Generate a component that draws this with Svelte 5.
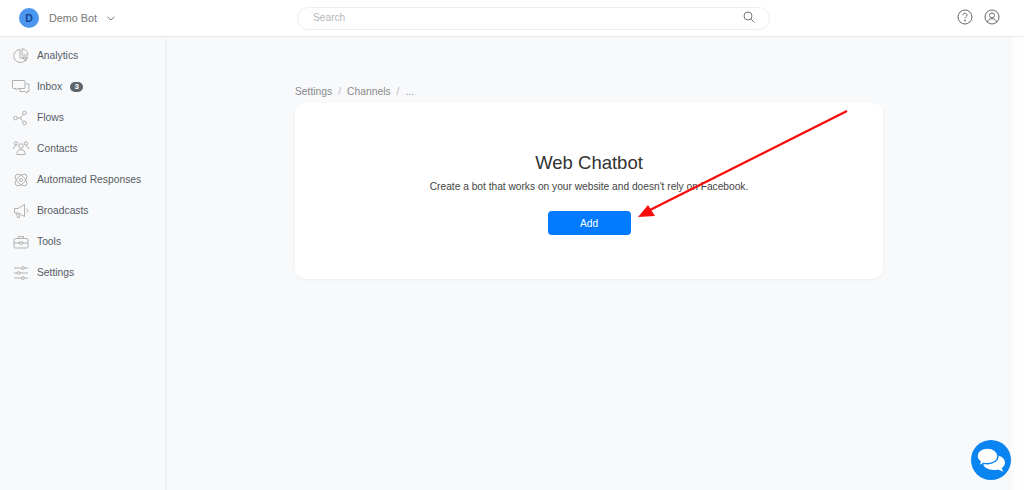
<script>
	const navItems = [
		{ label: 'Analytics', icon: 'analytics' },
		{ label: 'Inbox', icon: 'inbox', badge: 3 },
		{ label: 'Flows', icon: 'flows' },
		{ label: 'Contacts', icon: 'contacts' },
		{ label: 'Automated Responses', icon: 'auto' },
		{ label: 'Broadcasts', icon: 'broadcasts' },
		{ label: 'Tools', icon: 'tools' },
		{ label: 'Settings', icon: 'settings' }
	];

	const crumbs = ['Settings', 'Channels', '...'];
</script>

<div class="page">
	<header class="topbar">
		<div class="account">
			<span class="avatar">D</span>
			<span class="account-name">Demo Bot</span>
			<svg class="chevron" width="8" height="5" viewBox="0 0 8 5" fill="none" stroke="#777" stroke-width="1">
				<path d="M.5.8L4 4 7.500.8" />
			</svg>
		</div>
		<div class="search">
			<span>Search</span>
			<svg width="12" height="12" viewBox="0 0 12 12" fill="none" stroke="#777" stroke-width="1">
				<circle cx="5" cy="5" r="4" />
				<path d="M8 8l3.500 3.500" />
			</svg>
		</div>
		<div class="top-icons">
			<svg width="16" height="16" viewBox="0 0 16 16" fill="none" stroke="#666" stroke-width="1">
				<circle cx="8" cy="8" r="7" />
				<path d="M6 6.200c0-1.200.9-2 2-2s2 .8 2 1.900c0 1.500-2 1.600-2 3.300" />
				<circle cx="8" cy="11.600" r=".5" fill="#666" />
			</svg>
			<svg width="16" height="16" viewBox="0 0 16 16" fill="none" stroke="#666" stroke-width="1">
				<circle cx="8" cy="8" r="7" />
				<circle cx="8" cy="6.400" r="2.500" />
				<path d="M3.500 13c.5-2.200 2.300-3.300 4.500-3.300s4 1.100 4.500 3.300" />
			</svg>
		</div>
	</header>

	<div class="body">
		<nav class="sidebar">
			{#each navItems as item}
				<div class="nav-item">
					<svg class="nav-icon" width="18" height="16" viewBox="0 0 18 16" fill="none" stroke="#a8a8a8" stroke-width=".9">
						{#if item.icon === 'analytics'}
							<path d="M8 1.500a6.500 6.500 0 1 0 6.500 8.500H8z" />
							<path d="M10 .8a5.800 5.800 0 0 1 5.800 6.200H10z" />
							<path d="M10.500 9h5.200l-2.400 4.200z" />
						{:else if item.icon === 'inbox'}
							<path d="M.5 1.500h11.500a1 1 0 0 1 1 1v6a1 1 0 0 1-1 1H6L4 11V9.500H1.500a1 1 0 0 1-1-1z" />
							<path d="M14 5h3v7.500h-2V14l-2-1.500H8V10" />
						{:else if item.icon === 'flows'}
							<circle cx="3.500" cy="8" r="1.800" />
							<circle cx="12.500" cy="3" r="1.800" />
							<circle cx="12.500" cy="13" r="1.800" />
							<path d="M5.300 8h3M8.300 8l2.800-3.600M8.300 8l2.800 3.600" />
						{:else if item.icon === 'contacts'}
							<circle cx="4" cy="2.500" r="1.700" />
							<circle cx="14" cy="2.500" r="1.700" />
							<circle cx="9" cy="5" r="2.200" />
							<path d="M1.500 8c0-2 1-3.200 2.500-3.200M16.500 8c0-2-1-3.200-2.500-3.200" />
							<path d="M5 13.500c-.4-3 1.500-5 4-5s4.400 2 4 5z" />
						{:else if item.icon === 'auto'}
							<ellipse cx="9" cy="8" rx="7.200" ry="3.800" transform="rotate(45 9 8)" />
							<ellipse cx="9" cy="8" rx="7.200" ry="3.800" transform="rotate(-45 9 8)" />
							<circle cx="9" cy="8" r="1.500" />
						{:else if item.icon === 'broadcasts'}
							<path d="M2.500 5.500h3.500L12.500 1.500v12L6 10H2.500z" />
							<path d="M4.500 10l1 4.500h2L7 10.500M14.500 5.500l1.500 2-1.500 2" />
						{:else if item.icon === 'tools'}
							<rect x="2" y="4.500" width="14" height="9.500" rx="1.500" />
							<path d="M6.500 4.500V2.500h5v2M2 9h5M11 9h5M7 8h4v2H7z" />
						{:else}
							<path d="M2 3h14M2 8h14M2 13h14" />
							<circle cx="11" cy="3" r="1.400" fill="#f8f9fb" />
							<circle cx="6.500" cy="8" r="1.400" fill="#f8f9fb" />
							<circle cx="11" cy="13" r="1.400" fill="#f8f9fb" />
						{/if}
					</svg>
					<span>{item.label}</span>
					{#if item.badge}
						<span class="badge">{item.badge}</span>
					{/if}
				</div>
			{/each}
		</nav>

		<main class="content">
			<div class="column">
				<div class="crumbs">
					{#each crumbs as crumb, index}
						{#if index > 0}<span class="sep">/</span>{/if}
						<span>{crumb}</span>
					{/each}
				</div>
				<section class="card">
					<h1>Web Chatbot</h1>
					<p>Create a bot that works on your website and doesn't rely on Facebook.</p>
					<button>Add</button>
				</section>
			</div>
		</main>
		<div class="scroll-track"></div>
	</div>

	<!-- annotation drawn over the screenshot -->
	<svg class="arrow" width="230" height="120" viewBox="0 0 230 120">
		<path d="M227 1L28 101" stroke="#f80b0b" stroke-width="2.300" fill="none" />
		<path d="M18 107l10-12 7 11z" fill="#f80b0b" />
	</svg>

	<div class="chat-bubble">
		<svg width="30" height="26" viewBox="0 0 30 26">
			<path d="M18 8c6 0 11 3 11 7.500 0 2.300-1.300 4.200-3.200 5.500.2 1.300.9 2.600 1.900 3.500-2-.2-3.800-1-5-2-1.500.4-3 .5-4.700.5-6 0-11-3-11-7s5-7.500 11-7.500z" fill="#fff" />
			<path d="M11.500 1C5.700 1 1 4.500 1 9c0 2.300 1.200 4.300 3.200 5.800-.3 1.400-1.100 2.800-2.400 3.900 2.400-.2 4.400-1 5.900-2.300 1.200.3 2.500.4 3.800.4 5.800 0 10.500-3.400 10.500-7.800S17.300 1 11.500 1z" fill="#fff" stroke="#0a84f0" stroke-width="1.400" />
		</svg>
	</div>
</div>

<style>
	:global(body) {
		margin: 0;
		background: #f8f9fb;
		overflow: hidden;
	}

	.page {
		position: relative;
		width: 1024px;
		height: 490px;
		overflow: hidden;
		font-family: 'Liberation Sans', Arial, sans-serif;
	}

	.topbar {
		display: grid;
		grid-template-columns: 297px 473px 1fr;
		align-items: center;
		height: 36px;
		background: #fff;
		border-bottom: 1px solid #ebebee;
		box-shadow: 0 1px 1px rgba(0, 0, 0, 0.02);
	}

	.account {
		display: flex;
		align-items: center;
		padding-left: 19px;
	}

	.avatar {
		display: flex;
		align-items: center;
		justify-content: center;
		width: 20px;
		height: 20px;
		border-radius: 50%;
		background: #4b96ee;
		color: #14458c;
		font-size: 10.500px;
		font-weight: 700;
	}

	.account-name {
		margin-left: 10px;
		font-size: 10.800px;
		color: #777;
	}

	.chevron {
		margin-left: 10px;
	}

	.search {
		display: flex;
		align-items: center;
		justify-content: space-between;
		box-sizing: border-box;
		height: 23px;
		padding: 0 14px 2px 15px;
		border: 1px solid #eeeef0;
		border-radius: 12px;
		font-size: 10.200px;
		color: #b5b5b5;
	}

	.top-icons {
		display: flex;
		justify-content: flex-end;
		gap: 11px;
		padding: 0 24px 3px 0;
	}

	.body {
		display: flex;
		height: 453px;
	}

	.sidebar {
		box-sizing: border-box;
		flex: 0 0 167px;
		padding-top: 3px;
		border-right: 2px solid #f1f2f4;
	}

	.nav-item {
		display: flex;
		align-items: center;
		height: 31px;
		padding-left: 12px;
		font-size: 10.300px;
		color: #555c66;
	}

	.nav-icon {
		flex: none;
		margin-right: 7px;
	}

	.badge {
		display: flex;
		align-items: center;
		justify-content: center;
		width: 13px;
		height: 10px;
		margin-left: 8px;
		border-radius: 5px;
		background: #5c646c;
		color: #fff;
		font-size: 8px;
		font-weight: 700;
	}

	.content {
		flex: 1;
		padding: 48px 0 0 128px;
	}

	.column {
		width: 588px;
	}

	.crumbs {
		display: flex;
		gap: 6px;
		height: 18px;
		font-size: 10.300px;
		line-height: 13px;
		color: #8a8a8a;
	}

	.sep {
		color: #bbb;
	}

	.card {
		display: flex;
		flex-direction: column;
		align-items: center;
		box-sizing: border-box;
		height: 176px;
		padding-top: 48px;
		background: #fff;
		border-radius: 10px;
		box-shadow: 0 1px 3px rgba(0, 0, 0, 0.05);
	}

	h1 {
		margin: 0;
		font-size: 18.500px;
		font-weight: 400;
		line-height: 23px;
		color: #333;
	}

	p {
		margin: 6px 0 0;
		font-size: 10.200px;
		line-height: 13px;
		color: #444;
	}

	button {
		width: 83px;
		height: 24px;
		margin-top: 18px;
		padding: 0;
		border: none;
		border-radius: 4px;
		background: #007bff;
		color: #fff;
		font-family: inherit;
		font-size: 10.200px;
	}

	.scroll-track {
		flex: 0 0 12px;
		background: #fdfdfe;
	}

	.arrow {
		position: absolute;
		left: 620px;
		top: 110px;
	}

	.chat-bubble {
		position: absolute;
		left: 971px;
		top: 440px;
		display: flex;
		align-items: center;
		justify-content: center;
		width: 40px;
		height: 40px;
		border-radius: 50%;
		background: #0a84f0;
	}
</style>
